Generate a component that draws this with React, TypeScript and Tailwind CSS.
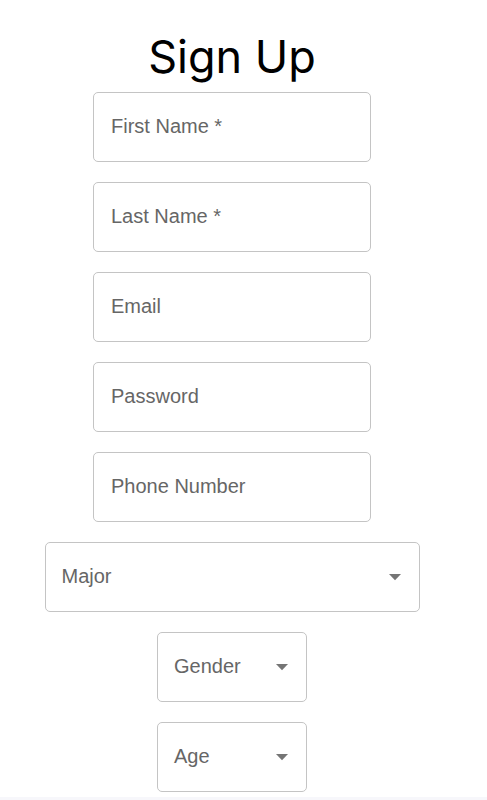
import React from 'react'

const TEXT_FIELDS = ['First Name *', 'Last Name *', 'Email', 'Password', 'Phone Number']

function TextField({ label }: { label: string }) {
  return (
    <div className="flex h-[70px] w-[278px] items-center rounded-[5px] border border-[#c4c4c4] bg-white pb-[2px] pl-[17px]">
      <span className="text-[20px] leading-none text-[#666666]">{label}</span>
    </div>
  )
}

function SelectField({ label, width }: { label: string; width: string }) {
  return (
    <div className={`relative flex h-[70px] items-center rounded-[5px] border border-[#c4c4c4] bg-white pb-[2px] pl-4 ${width}`}>
      <span className="text-[20px] leading-none text-[#666666]">{label}</span>
      {/* drop-down caret */}
      <svg className="absolute right-[18px] top-1/2 -mt-[3px]" width="12" height="7" viewBox="0 0 12 7">
        <path d="M0 0h12L6 6.3z" fill="#757575" />
      </svg>
    </div>
  )
}

export default function App() {
  return (
    <div className="min-h-[800px] w-full bg-white" style={{ fontFamily: '"Liberation Sans", Arial, sans-serif' }}>
      <div className="flex w-[464px] flex-col items-center">
        <h1
          className="mt-[29px] h-[55px] text-[45px] leading-[55px] font-normal text-black"
          style={{ fontFamily: 'Inter, "Noto Sans", sans-serif' }}
        >
          Sign Up
        </h1>
        <div className="mt-[8px] flex flex-col items-center gap-[20px]">
          {TEXT_FIELDS.map(l => (
            <TextField key={l} label={l} />
          ))}
          <SelectField label="Major" width="w-[375px]" />
          <SelectField label="Gender" width="w-[150px]" />
          <SelectField label="Age" width="w-[150px]" />
        </div>
      </div>
      <div className="mt-[5px] h-[40px] w-full bg-[#f7f7fb]" />
    </div>
  )
}
